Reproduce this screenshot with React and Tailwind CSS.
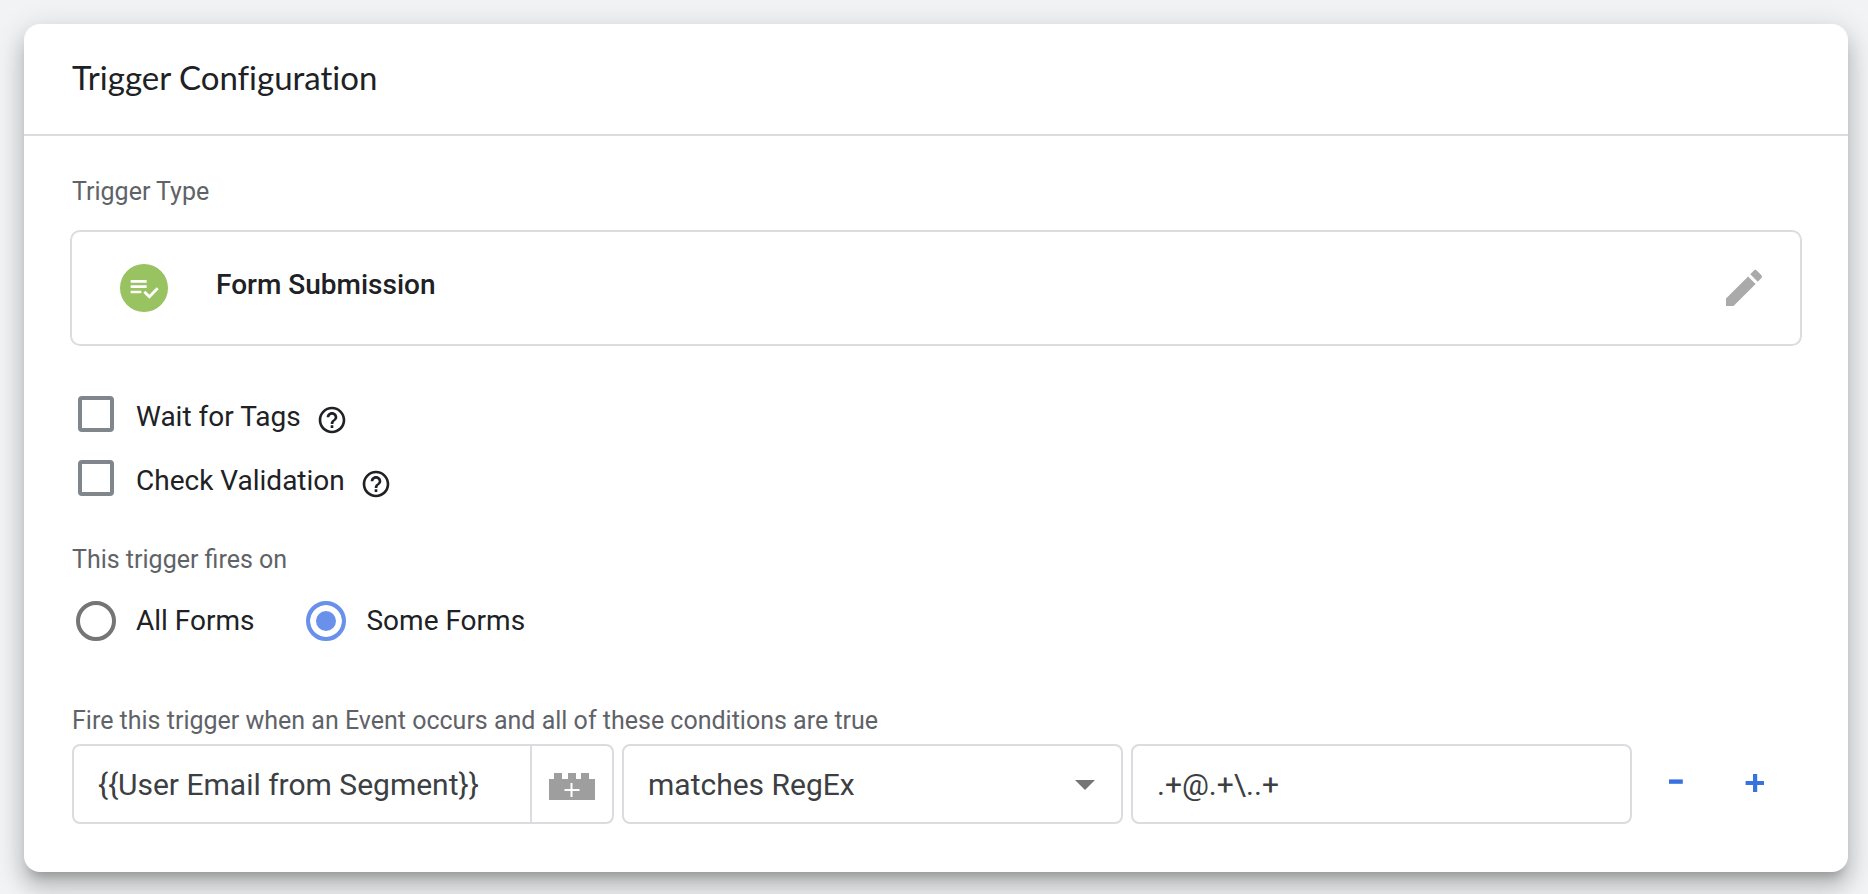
import React, { useState } from 'react';

const labelClass = 'block pl-0.5 text-[25px] leading-8 text-[#5f6368]';
const fieldClass = 'h-20 rounded-[8px] border-2 border-[#dadce0] bg-white text-[30px] text-[#3c4043]';

const FormIcon = () => (
  <span className="flex size-12 shrink-0 items-center justify-center rounded-full bg-[#99c261]">
    <svg viewBox="0 0 24 24" className="size-8 fill-white" aria-hidden="true">
      <path d="M14 10H2v2h12v-2zm0-4H2v2h12V6zM2 16h8v-2H2v2zm19.5-4.5L23 13l-6.99 7-4.51-4.5L13 14l3.01 3 5.49-5.5z" />
    </svg>
  </span>
);

const PencilIcon = () => (
  <svg viewBox="0 0 24 24" className="size-12 fill-[#aaaaaa]" aria-hidden="true">
    <path d="M3 17.25V21h3.75L17.81 9.94l-3.75-3.75L3 17.25zM20.71 7.04a.996.996 0 0 0 0-1.41l-2.34-2.34a.996.996 0 0 0-1.41 0l-1.83 1.83 3.75 3.75 1.83-1.83z" />
  </svg>
);

const HelpIcon = () => (
  <svg viewBox="0 0 24 24" className="size-8 fill-[#202124]" aria-hidden="true">
    <path d="M11 18h2v-2h-2v2zm1-16C6.48 2 2 6.48 2 12s4.48 10 10 10 10-4.48 10-10S17.52 2 12 2zm0 18c-4.41 0-8-3.59-8-8s3.59-8 8-8 8 3.59 8 8-3.59 8-8 8zm0-14c-2.21 0-4 1.79-4 4h2c0-1.1.9-2 2-2s2 .9 2 2c0 2-3 1.75-3 5h2c0-2.25 3-2.5 3-5 0-2.21-1.79-4-4-4z" />
  </svg>
);

const BrickIcon = () => (
  <svg viewBox="0 0 46 27" className="h-[27px] w-[46px]" aria-hidden="true">
    <path d="M0 6h5V0h8v6h6V0h8v6h5V0h8v6h6v21H0z" fill="#9e9e9e" />
    <path d="M22.5 10v14M15.5 17h15" stroke="#fff" strokeWidth="2" />
  </svg>
);

const MinusIcon = () => (
  <svg viewBox="0 0 20 20" className="size-5 fill-[#3871e0]" aria-hidden="true">
    <path d="M3 5.4h13.8v4.4H3z" />
  </svg>
);

const PlusIcon = () => (
  <svg viewBox="0 0 20 20" className="size-5 fill-[#3871e0]" aria-hidden="true">
    <path d="M8 0h4.2v7h6.8v4h-6.8v7H8v-7H.6V7H8z" />
  </svg>
);

const CheckRow = ({ id, label, checked, onChange }) => (
  <div className="flex items-start">
    <input
      id={id}
      type="checkbox"
      checked={checked}
      onChange={onChange}
      className="size-9 shrink-0 appearance-none rounded-[4px] border-4 border-[#80868b] bg-white checked:bg-[#80868b]"
    />
    <label htmlFor={id} className="pl-[22px] text-[28px] leading-[42px] text-[#202124]">{label}</label>
    <button type="button" aria-label={`Help: ${label}`} className="ml-[15px] flex h-12 items-center">
      <HelpIcon />
    </button>
  </div>
);

const RadioOption = ({ id, label, checked, onChange }) => (
  <div className="flex items-center">
    <input
      id={id}
      type="radio"
      name="fires-on"
      checked={checked}
      onChange={onChange}
      className="size-10 shrink-0 appearance-none rounded-full border-4 border-[#757575] checked:border-[#6991ec] checked:bg-[#6991ec] checked:shadow-[inset_0_0_0_6px_#fff]"
    />
    <label htmlFor={id} className="pl-5 text-[28px] leading-10 text-[#202124]">{label}</label>
  </div>
);

const App = () => {
  const [waitForTags, setWaitForTags] = useState(false);
  const [checkValidation, setCheckValidation] = useState(false);
  const [firesOn, setFiresOn] = useState('some');
  const [variable, setVariable] = useState('{{User Email from Segment}}');
  const [operator, setOperator] = useState('matches RegEx');
  const [pattern, setPattern] = useState('.+@.+\\..+');

  return (
    <div className="min-h-screen bg-[#f1f3f4] pt-6 pr-5 pb-5 pl-6 font-['Roboto',sans-serif]">
      <section className="rounded-[16px] bg-white shadow-[0_10px_10px_-6px_rgba(0,0,0,0.2),0_16px_20px_2px_rgba(0,0,0,0.14),0_6px_28px_4px_rgba(0,0,0,0.12)]">
        <header className="border-b-2 border-[#dadce0] px-12 pt-[33px] pb-[37px]">
          <h2 className="font-['Lato',sans-serif] text-[33px] leading-10 text-[#202124] [font-variant-ligatures:none]">Trigger Configuration</h2>
        </header>

        <div className="px-[46px] pt-10 pb-12">
          <h3 className={labelClass}>Trigger Type</h3>
          <div className="mt-[22px] flex items-start rounded-[10px] border-2 border-[#dadce0] py-8 pr-8 pl-12">
            <FormIcon />
            <span className="flex-1 pl-12 text-[28px] leading-[42px] font-medium text-[#202124]">Form Submission</span>
            <button type="button" aria-label="Edit trigger type">
              <PencilIcon />
            </button>
          </div>

          <div className="mt-[50px] flex flex-col gap-4 pl-2">
            <CheckRow
              id="wait-for-tags"
              label="Wait for Tags"
              checked={waitForTags}
              onChange={(e) => setWaitForTags(e.target.checked)}
            />
            <CheckRow
              id="check-validation"
              label="Check Validation"
              checked={checkValidation}
              onChange={(e) => setCheckValidation(e.target.checked)}
            />
          </div>

          <fieldset className="mt-9">
            <legend className={labelClass}>This trigger fires on</legend>
            <div className="mt-[25px] flex gap-13 pl-1.5">
              <RadioOption id="all-forms" label="All Forms" checked={firesOn === 'all'} onChange={() => setFiresOn('all')} />
              <RadioOption id="some-forms" label="Some Forms" checked={firesOn === 'some'} onChange={() => setFiresOn('some')} />
            </div>
          </fieldset>

          <h3 className={`${labelClass} mt-16`}>
            Fire this trigger when an Event occurs and all of these conditions are true
          </h3>
          <div className="mt-[7px] flex items-center pl-0.5">
            <div className="grid flex-1 grid-cols-[542fr_501fr_501fr] gap-2">
              <div className={`${fieldClass} flex`}>
                <input
                  type="text"
                  aria-label="Variable"
                  value={variable}
                  onChange={(e) => setVariable(e.target.value)}
                  className="min-w-0 flex-1 bg-transparent pl-6 outline-none"
                />
                <button
                  type="button"
                  aria-label="Insert variable"
                  className="flex w-[82px] items-center justify-center border-l-2 border-[#dadce0] pt-1"
                >
                  <BrickIcon />
                </button>
              </div>
              <div className="relative">
                <select
                  aria-label="Operator"
                  value={operator}
                  onChange={(e) => setOperator(e.target.value)}
                  className={`${fieldClass} block w-full appearance-none pl-6`}
                >
                  <option>matches RegEx</option>
                  <option>contains</option>
                  <option>equals</option>
                </select>
                <svg viewBox="0 0 20 10" className="pointer-events-none absolute top-9 right-7 h-2.5 w-5 fill-[#757575]" aria-hidden="true">
                  <path d="M0 0h20L10 10z" />
                </svg>
              </div>
              <input
                type="text"
                aria-label="Value"
                value={pattern}
                onChange={(e) => setPattern(e.target.value)}
                className={`${fieldClass} w-full min-w-0 px-6 outline-none`}
              />
            </div>
            <div className="flex pr-2 pl-1">
              <button type="button" aria-label="Remove condition" className="flex h-20 w-[79px] items-center justify-center">
                <MinusIcon />
              </button>
              <button type="button" aria-label="Add condition" className="flex h-20 w-[79px] items-center justify-center">
                <PlusIcon />
              </button>
            </div>
          </div>
        </div>
      </section>
    </div>
  );
};

export default App;
